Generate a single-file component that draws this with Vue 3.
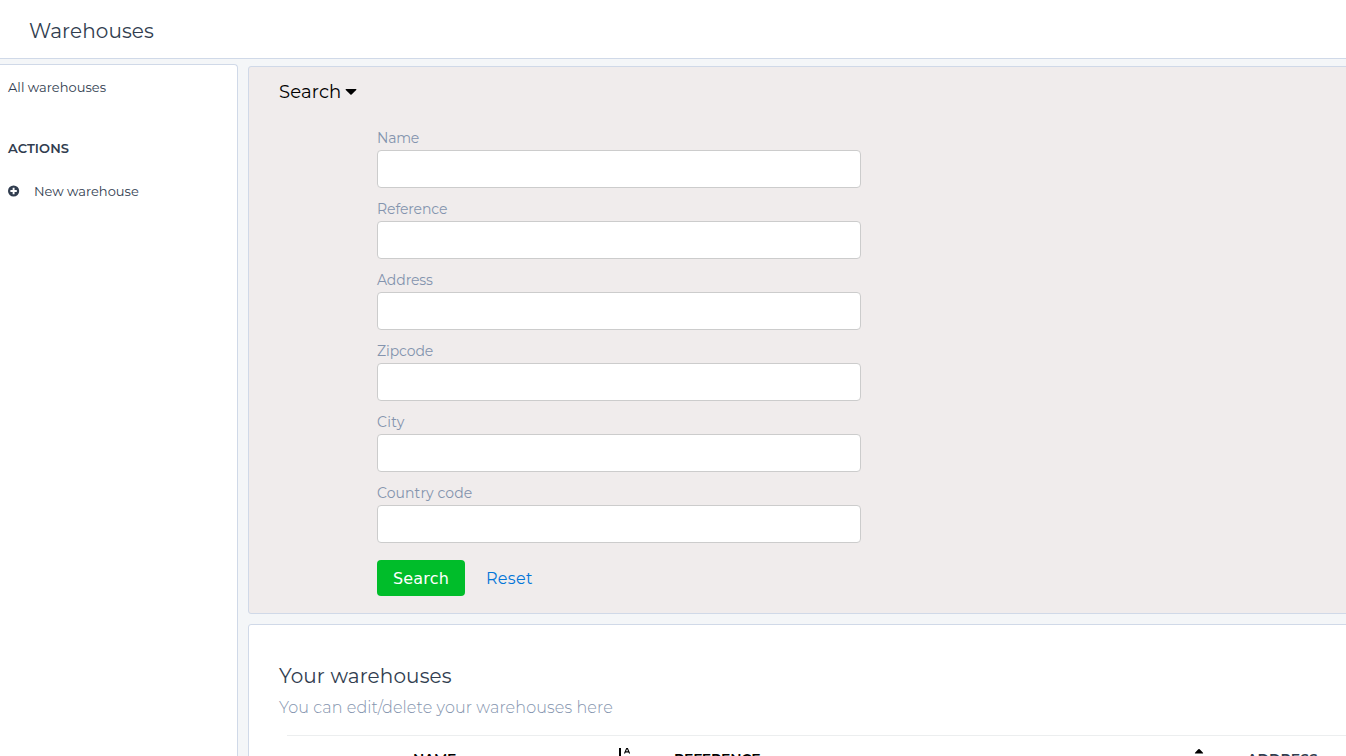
<script setup>
const fields = [
  { label: 'Name', key: 'name' },
  { label: 'Reference', key: 'reference' },
  { label: 'Address', key: 'address' },
  { label: 'Zipcode', key: 'zipcode' },
  { label: 'City', key: 'city' },
  { label: 'Country code', key: 'country' },
]
</script>

<template>
  <div class="page">
    <header class="topbar"><h1>Warehouses</h1></header>
    <div class="body">
      <aside class="sidebar">
        <a class="all">All warehouses</a>
        <h2>ACTIONS</h2>
        <a class="new">
          <svg width="12" height="12" viewBox="0 0 12 12">
            <circle cx="5.6" cy="6" r="5.6" fill="#313d4f" />
            <path d="M5.6 2.8v6.4M2.4 6h6.4" stroke="#fff" stroke-width="1.9" />
          </svg>
          <span>New warehouse</span>
        </a>
      </aside>
      <main class="content">
        <section class="panel search">
          <div class="toggle">
            <span class="word">Search</span>
            <svg width="12" height="7" viewBox="0 0 12 7"><path d="M1 0h10q.8.2.2.9L6.6 5.6q-.6.5-1.2 0L.8.9Q.2.2 1 0z" /></svg>
          </div>
          <form @submit.prevent>
            <label v-for="f in fields" :key="f.key" :class="f.key">
              <span>{{ f.label }}</span>
              <input type="text" />
            </label>
            <div class="buttons">
              <button type="submit">Search</button>
              <a>Reset</a>
            </div>
          </form>
        </section>
        <section class="panel list">
          <h3>Your warehouses</h3>
          <p>You can edit/delete your warehouses here</p>
          <div class="thead">
            <span class="th-name">NAME</span>
            <svg class="sort" width="14" height="18" viewBox="0 0 14 18">
              <path d="M3 0v14M0 12l3 4 3-4" fill="none" stroke="#000" stroke-width="2" />
              <path d="M7.5 5.5 9.6.6h.9L12.6 5.5M8.4 3.9h3.4M7.4 9.5H12l-4.5 5.8h5" fill="none" stroke="#000" stroke-width="1.1" />
            </svg>
            <span class="th-ref">REFERENCE</span>
            <svg class="updown" width="10" height="14" viewBox="0 0 10 14">
              <path d="M4.3 1.3q.7-.6 1.4 0L9 4.7q.4.9-.4.9H1.4Q.6 5.6 1 4.7zM1 9h8l-4 4.5z" />
            </svg>
            <span class="th-address">ADDRESS</span>
          </div>
        </section>
      </main>
    </div>
  </div>
</template>

<style>
html, body { margin: 0; overflow: hidden; background: #f4f6f8; }
</style>

<style scoped>
* { box-sizing: border-box; }
.page {
  width: 1346px; height: 756px; overflow: hidden; background: #f4f6f8;
  display: flex; flex-direction: column; color: #313d4f; white-space: nowrap;
  font-family: Montserrat, Inter, "Open Sans", sans-serif;
}
h1, h2, h3, p { margin: 0; }
svg { display: block; flex: none; }
.topbar { height: 59px; flex: none; background: #fff; border-bottom: 1px solid #d0d9e8; padding: 16px 0 0 29px; }
h1 { font-size: 20px; line-height: 30px; font-weight: 400; letter-spacing: .1px; }
.body { flex: 1; min-height: 0; display: flex; gap: 10px; }
.sidebar {
  width: 238px; flex: none; margin-top: 5px; padding: 12px 0 0 8px; background: #fff;
  border: solid #d0d9e8; border-width: 1px 1px 0 0; border-top-right-radius: 4px;
  display: flex; flex-direction: column; font-size: 13px; line-height: 20px;
}
.all { letter-spacing: .03px; }
h2 { margin-top: 41px; font-size: 13px; line-height: 20px; font-weight: 600; letter-spacing: .1px; }
.new { margin-top: 23px; display: flex; align-items: center; gap: 14px; }
.content { width: 1150px; flex: none; padding-top: 7px; display: flex; flex-direction: column; gap: 10px; }
.panel { border: 1px solid #d0d9e8; border-radius: 3px; flex: none; }
.search { height: 548px; background: #f0ecec; padding: 12px 30px 0; }
.toggle { display: flex; align-items: center; gap: 4px; height: 26px; font-size: 18px; font-weight: 400; color: #000; }
.word { width: 62px; letter-spacing: .15px; }
form { margin: 23px 0 0 98px; width: 484px; display: flex; flex-direction: column; gap: 11px; }
label { display: flex; flex-direction: column; font-size: 14px; line-height: 20px; font-weight: 400; color: #8494ae; gap: 2px; letter-spacing: -.1px; }
.name { letter-spacing: -.25px; }
.city { letter-spacing: .3px; }
.country { letter-spacing: .09px; }
input { height: 38px; margin: 0; padding: 6px 12px; border: 1px solid #ccc; border-radius: 4px; background: #fff; outline: none; font: inherit; }
.buttons { margin-top: 6px; display: flex; align-items: center; gap: 21px; }
button { width: 88px; height: 36px; padding: 0; border: 0; border-radius: 4px; background: #00bd2a; color: #fff; font: 16px "DejaVu Sans", sans-serif; letter-spacing: .2px; }
.buttons a { font-size: 16px; color: #0275d8; letter-spacing: .3px; }
.list { height: 200px; background: #fff; padding: 36px 30px 0; }
h3 { font-size: 20px; line-height: 30px; font-weight: 400; letter-spacing: .13px; }
p { margin-top: 5px; font-size: 16px; line-height: 24px; font-weight: 300; color: #8494ae; letter-spacing: .11px; }
.thead {
  margin: 15px 0 0 8px; border-top: 1px solid #eceeef; height: 60px; padding-top: 13px;
  display: flex; align-items: flex-start; font-size: 14px; line-height: 20px; font-weight: 600; color: #000;
}
.th-name { width: 204px; margin-left: 126px; letter-spacing: -.4px; }
.sort { margin-top: -1px; }
.updown { margin-top: -1px; }
.th-ref { width: 520px; margin-left: 43px; letter-spacing: -.22px; }
.th-address { margin-left: 43px; color: #313d4f; }
</style>
